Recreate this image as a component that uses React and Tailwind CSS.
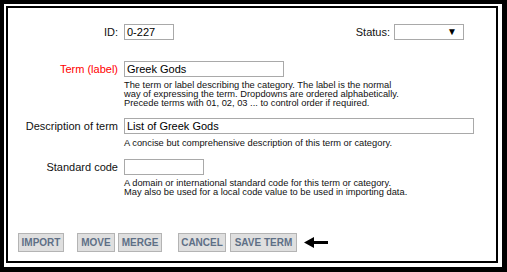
import React from "react";

const helpTerm = [
    "The term or label describing the category. The label is the normal",
    "way of expressing the term. Dropdowns are ordered alphabetically.",
    "Precede terms with 01, 02, 03 ... to control order if required.",
];
const helpCode = [
    "A domain or international standard code for this term or category.",
    "May also be used for a local code value to be used in importing data.",
];

function Field({label, red, children}) {
    return (
        <div className="flex items-center">
            <div className={`w-[110px] text-right text-[11px] ${red ? "text-[#ff0000]" : "text-[#111]"}`}>{label}</div>
            <div className="ml-[6px] flex">{children}</div>
        </div>
    );
}

function Help({lines, className = ""}) {
    return (
        <div className={`ml-[116px] text-[9.3px] leading-[9px] text-[#111] ${className}`}>
            {lines.map((l) => <div key={l}>{l}</div>)}
        </div>
    );
}

function Btn({children, w}) {
    return (
        <div className={`${w} h-[19px] flex items-center justify-center bg-[#dfdfdf] border border-[#b4b4b4] text-[10px] font-bold text-[#5e6f86]`}>
            {children}
        </div>
    );
}

export default function App() {
    return (
        <div className="w-[507px] h-[272px] bg-black pt-[4px] pl-[4px] pr-[5px] pb-[5px]"
             style={{fontFamily: '"Liberation Sans", Arial, sans-serif'}}>
            <div className="h-full bg-white pt-[2px] pl-[2px] pr-[4px] pb-[4px]">
                <div className="h-full border-2 border-black pt-[16px] flex flex-col">
                    <div className="flex items-center">
                        <Field label="ID:">
                            <div className="w-[50px] h-[16px] border border-[#a9a9a9] px-[2px] text-[11px] leading-[14px]">0-227</div>
                        </Field>
                        <div className="ml-auto mr-[32px] flex items-center">
                            <span className="text-[11px] text-[#111] mr-[4px]">Status:</span>
                            <div className="w-[70px] h-[16px] border border-[#a9a9a9] flex items-center justify-end pr-[6px]">
                                <span className="text-[10px] leading-none text-black">▼</span>
                            </div>
                        </div>
                    </div>

                    <div className="mt-[20px]">
                        <Field label="Term (label)" red>
                            <div className="w-[160px] h-[16px] border border-[#a9a9a9] px-[2px] text-[11px] leading-[14px]">Greek Gods</div>
                        </Field>
                    </div>
                    <Help lines={helpTerm} className="mt-[4px]"/>

                    <div className="mt-[10px]">
                        <Field label="Description of term">
                            <div className="w-[350px] h-[16px] border border-[#a9a9a9] px-[2px] text-[11px] leading-[14px]">List of Greek Gods</div>
                        </Field>
                    </div>
                    <Help lines={["A concise but comprehensive description of this term or category."]} className="mt-[4px]"/>

                    <div className="mt-[11px]">
                        <Field label="Standard code">
                            <div className="w-[80px] h-[16px] border border-[#a9a9a9]"/>
                        </Field>
                    </div>
                    <Help lines={helpCode} className="mt-[4px]"/>

                    <div className="mt-auto mb-[9px] ml-[10px] flex items-center">
                        <Btn w="w-[46px]">IMPORT</Btn>
                        <div className="ml-[13px]"><Btn w="w-[38px]">MOVE</Btn></div>
                        <div className="ml-[3px]"><Btn w="w-[44px]">MERGE</Btn></div>
                        <div className="ml-[16px]"><Btn w="w-[48px]">CANCEL</Btn></div>
                        <div className="ml-[4px]"><Btn w="w-[67px]">SAVE TERM</Btn></div>
                        <svg className="ml-[7px]" width="24" height="11" viewBox="0 0 24 11">
                            <polygon points="0,5.5 10,0 10,4 24,4 24,7 10,7 10,11" fill="black"/>
                        </svg>
                    </div>
                </div>
            </div>
        </div>
    );
}
